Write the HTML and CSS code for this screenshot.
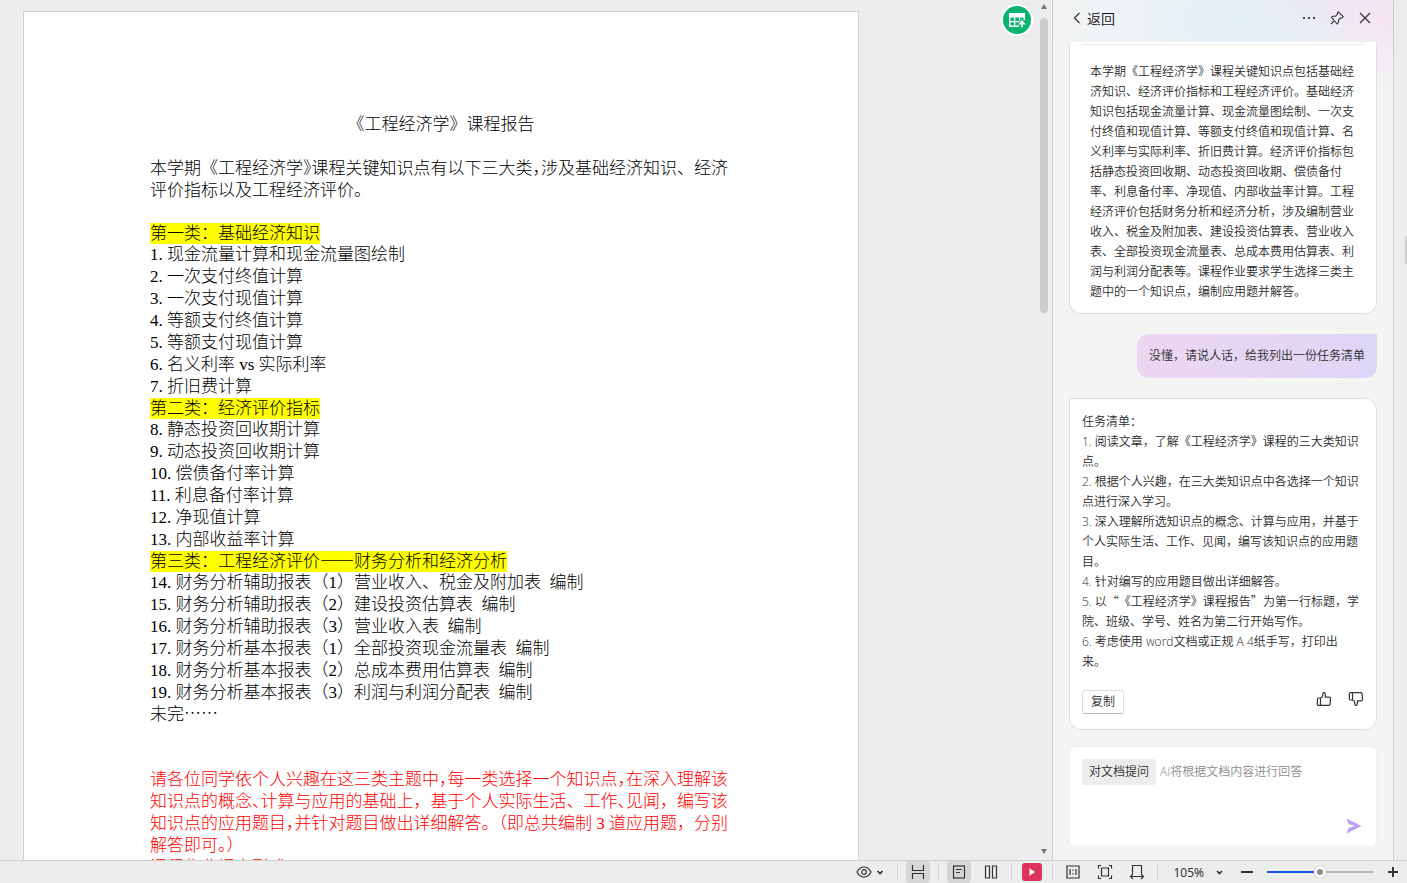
FILE: index.html
```html
<!DOCTYPE html>
<html lang="zh-CN">
<head>
<meta charset="utf-8">
<title>《工程经济学》课程报告</title>
<link rel="stylesheet" href="styles.css">
</head>
<body>
<div class="app">
  <main class="workspace">
    <article class="page">
      <h1 class="page-title">《工程经济学》课程报告</h1>
      <p class="intro">本学期《工程经济学<span class="half">》</span>课程关键知识点有以下三大类<span class="half">，</span>涉及基础经济知识、经济<br>评价指标以及工程经济评价。</p>
      <section>
        <h2 class="topic"><mark>第一类：基础经济知识</mark></h2>
        <p>1. 现金流量计算和现金流量图绘制</p>
        <p>2. 一次支付终值计算</p>
        <p>3. 一次支付现值计算</p>
        <p>4. 等额支付终值计算</p>
        <p>5. 等额支付现值计算</p>
        <p>6. 名义利率 vs 实际利率</p>
        <p>7. 折旧费计算</p>
      </section>
      <section>
        <h2 class="topic"><mark>第二类：经济评价指标</mark></h2>
        <p>8. 静态投资回收期计算</p>
        <p>9. 动态投资回收期计算</p>
        <p>10. 偿债备付率计算</p>
        <p>11. 利息备付率计算</p>
        <p>12. 净现值计算</p>
        <p>13. 内部收益率计算</p>
      </section>
      <section>
        <h2 class="topic"><mark>第三类：工程经济评价<span class="cjk">——</span>财务分析和经济分析</mark></h2>
        <p>14. 财务分析辅助报表（1）营业收入、税金及附加表&nbsp; 编制</p>
        <p>15. 财务分析辅助报表（2）建设投资估算表&nbsp; 编制</p>
        <p>16. 财务分析辅助报表（3）营业收入表&nbsp; 编制</p>
        <p>17. 财务分析基本报表（1）全部投资现金流量表&nbsp; 编制</p>
        <p>18. 财务分析基本报表（2）总成本费用估算表&nbsp; 编制</p>
        <p>19. 财务分析基本报表（3）利润与利润分配表&nbsp; 编制</p>
        <p>未完<span class="cjk">……</span></p>
      </section>
      <p class="notice">请各位同学依个人兴趣在这三类主题中<span class="half">，</span>每一类选择一个知识点<span class="half">，</span>在深入理解该<br>知识点的概念<span class="half">、</span>计算与应用的基础上，基于个人实际生活、工作<span class="half">、</span>见闻，编写该<br>知识点的应用题目<span class="half">，</span>并针对题目做出详细解答。（即总共编制 3 道应用题，分别<br>解答即可。）<br>课程作业提交形式</p>
    </article>
    <button class="table-btn" aria-label="导出表格">
      <svg width="28" height="28" viewBox="0 0 28 28"><circle cx="14" cy="14" r="14" fill="#0bb370"/><path d="M6 7h16v7H6zM6 7h1.500v14H6zM6 19.500h10V21H6zM6 15h10v1.300H6zM11 10h1.300v10H11zM16 10h1.300v5H16z" fill="#fff"/><path d="M7.500 11.500H11V15H7.500zM12.300 11.500H16V15h-3.700zM17.300 11.500h3.200V15h-3.200z" fill="#0bb370"/><path d="M19 21.500V16M16.800 17.700l2.200-2.600 2.200 2.600z" fill="#fff" stroke="#fff" stroke-width="1.500"/></svg>
    </button>
  </main>
  <div class="scrollbar">
    <svg width="6" height="5" viewBox="0 0 6 5"><path d="M3 0l3 5H0z" fill="#777"/></svg>
    <div class="thumb"></div>
    <svg width="6" height="5" viewBox="0 0 6 5"><path d="M3 5l3-5H0z" fill="#777"/></svg>
  </div>
  <aside class="panel">
    <header class="panel-head">
      <button class="back"><svg width="8" height="12" viewBox="0 0 8 12"><path d="M6.500 1L1.500 6l5 5" fill="none" stroke="#333" stroke-width="1.200"/></svg>返回</button>
      <span class="head-tools">
        <button aria-label="更多"><svg width="16" height="16" viewBox="0 0 16 16" fill="#222"><circle cx="3" cy="8" r="1.100"/><circle cx="8" cy="8" r="1.100"/><circle cx="13" cy="8" r="1.100"/></svg></button>
        <button aria-label="固定"><svg width="16" height="16" viewBox="0 0 16 16" fill="none" stroke="#333" stroke-width="1.100" stroke-linejoin="round"><path d="M9.300 1.800l4.900 4.900-1.300 1.300h-1.200L9.500 10.200l-.2 2.600-1.200 1.200L2.500 7.400l1.300-1.200 2.500.1 2.200-2.200V2.600zM5.300 10.700L2 14"/></svg></button>
        <button aria-label="关闭"><svg width="16" height="16" viewBox="0 0 16 16"><path d="M3 3l10 10M13 3L3 13" stroke="#333" stroke-width="1.200"/></svg></button>
      </span>
    </header>
    <div class="chat">
      <div class="card summary">
        <p>本学期《工程经济学》课程关键知识点包括基础经<br>济知识、经济评价指标和工程经济评价。基础经济<br>知识包括现金流量计算、现金流量图绘制、一次支<br>付终值和现值计算、等额支付终值和现值计算、名<br>义利率与实际利率、折旧费计算。经济评价指标包<br>括静态投资回收期、动态投资回收期、偿债备付<br>率、利息备付率、净现值、内部收益率计算。工程<br>经济评价包括财务分析和经济分析，涉及编制营业<br>收入、税金及附加表、建设投资估算表、营业收入<br>表、全部投资现金流量表、总成本费用估算表、利<br>润与利润分配表等。课程作业要求学生选择三类主<br>题中的一个知识点，编制应用题并解答。</p>
      </div>
      <p class="bubble">没懂，请说人话，给我列出一份任务清单</p>
      <div class="card answer">
        <p>任务清单：<br>1. 阅读文章，了解《工程经济学》课程的三大类知识<br>点。<br>2. 根据个人兴趣，在三大类知识点中各选择一个知识<br>点进行深入学习。<br>3. 深入理解所选知识点的概念、计算与应用，并基于<br>个人实际生活、工作、见闻，编写该知识点的应用题<br>目。<br>4. 针对编写的应用题目做出详细解答。<br>5. 以<span class="cjk">“</span>《工程经济学》课程报告<span class="cjk">”</span>为第一行标题，学<br>院、班级、学号、姓名为第二行开始写作。<br>6. 考虑使用 word文档或正规 A 4纸手写，打印出<br>来。</p>
        <div class="actions">
          <button class="copy">复制</button>
          <span class="votes">
            <button aria-label="赞"><svg width="16" height="16" viewBox="0 0 16 16" fill="none" stroke="#333" stroke-width="1.200" stroke-linejoin="round"><path d="M4.500 7v7.400H2.600a1.200 1.200 0 0 1-1.200-1.200V8.100A1.200 1.200 0 0 1 2.600 7zM4.500 7l1.800-1 .8-4c.1-.8 2.200-.7 2.200 1v3.200h3.900c.8 0 1.400.6 1.300 1.400l-.4 5.600c-.1.700-.6 1.200-1.300 1.200H4.500"/></svg></button>
            <button aria-label="踩"><svg width="16" height="16" viewBox="0 0 16 16" fill="none" stroke="#333" stroke-width="1.200" stroke-linejoin="round"><path d="M4.500 9V1.600H2.600a1.200 1.200 0 0 0-1.200 1.200v5.100A1.200 1.200 0 0 0 2.600 9zM4.500 9l1.800 1 .8 4c.1.800 2.200.7 2.200-1V9.800h3.900c.8 0 1.400-.6 1.300-1.400l-.4-5.600c-.1-.7-.6-1.200-1.300-1.200H4.500"/></svg></button>
          </span>
        </div>
      </div>
      <form class="ask">
        <div class="ask-row"><label class="chip" for="q">对文档提问</label><textarea id="q" class="ask-input" placeholder="AI将根据文档内容进行回答"></textarea></div>
        <button class="send" type="button" aria-label="发送"><svg width="16" height="16" viewBox="0 0 16 16"><path d="M.5.500L15.500 8 .5 15.500 2.500 10 9 8 2.500 6z" fill="#bd9ff5"/></svg></button>
      </form>
    </div>
  </aside>
  <div class="rail"><div class="grip"></div></div>
</div>
<footer class="status">
  <button class="tool eye" aria-label="视图保护"><svg width="27" height="16" viewBox="0 0 27 16" fill="none" stroke="#333" stroke-width="1.200"><path d="M1 8c3.500-6.700 10.500-6.700 14 0-3.500 6.700-10.500 6.700-14 0z"/><circle cx="8" cy="8" r="2.300"/><path d="M21.500 7l2.500 2.500L26.500 7" stroke-width="1.600"/></svg></button>
  <i class="sep"></i>
  <button class="tool on" aria-label="页间空白"><svg width="16" height="16" viewBox="0 0 16 16" fill="none" stroke="#333" stroke-width="1.200"><path d="M2.500 1v5.500h11V1M2.500 15V9.500h11V15"/></svg></button>
  <i class="sep"></i>
  <button class="tool on" aria-label="页面视图"><svg width="16" height="16" viewBox="0 0 16 16" fill="none" stroke="#333" stroke-width="1.200"><rect x="2.500" y="2" width="11" height="12"/><path d="M5 5.500h6M5 8.500h4"/></svg></button>
  <button class="tool" aria-label="双页视图"><svg width="16" height="16" viewBox="0 0 16 16" fill="none" stroke="#333" stroke-width="1.200"><path d="M2.500 2h4v12h-4zM9.500 2h4v12h-4z"/></svg></button>
  <i class="sep"></i>
  <button class="play" aria-label="放映"><svg width="10" height="10" viewBox="0 0 10 10"><path d="M2.500 1.200l5.500 3.800-5.500 3.800z" fill="#fff"/></svg></button>
  <i class="sep"></i>
  <button class="tool" aria-label="实际大小"><svg width="16" height="16" viewBox="0 0 16 16" fill="none" stroke="#333" stroke-width="1.200"><path d="M2 2h12v12H2zM5 5v6M11 5v6M8 5.500V7M8 9v1.500"/></svg></button>
  <button class="tool" aria-label="适合整页"><svg width="16" height="16" viewBox="0 0 16 16" fill="none" stroke="#333" stroke-width="1.200"><path d="M4.500 4h7v8h-7zM1.500 4.500v-3H4M12 1.500h2.500v3M14.500 11.500v3H12M4 14.500H1.500v-3"/></svg></button>
  <button class="tool" aria-label="适合页宽"><svg width="16" height="16" viewBox="0 0 16 16" fill="none" stroke="#333" stroke-width="1.200"><path d="M3.500 9.500v-8h9v8M2 12.500h12M4 10l-2.500 2.500L4 15M12 10l2.500 2.500L12 15"/></svg></button>
  <i class="sep"></i>
  <button class="zoom-value">105%<svg width="7" height="5" viewBox="0 0 7 5"><path d="M1 1l2.500 2.500L6 1" fill="none" stroke="#333" stroke-width="1.600"/></svg></button>
  <button class="step" aria-label="缩小"><svg width="12" height="12" viewBox="0 0 12 12"><path d="M0 6h12" stroke="#333" stroke-width="2"/></svg></button>
  <input class="zoom-range" type="range" min="0" max="100" value="50" aria-label="缩放">
  <button class="step" aria-label="放大"><svg width="12" height="12" viewBox="0 0 12 12"><path d="M1 6h10M6 1v10" stroke="#333" stroke-width="2"/></svg></button>
</footer>
</body>
</html>
```

FILE: styles.css
```css
* { box-sizing: border-box; }

body {
  margin: 0;
  height: 100vh;
  display: flex;
  flex-direction: column;
  overflow: hidden;
  background: #ededed;
  font-family: "Noto Sans CJK SC", sans-serif;
  font-size: 12px;
  color: #222;
}

h1, h2, p { margin: 0; font-size: inherit; font-weight: inherit; }

button {
  border: 0;
  padding: 0;
  background: none;
  font: inherit;
  color: inherit;
  display: flex;
  align-items: center;
  justify-content: center;
}

svg { display: block; }

.app { flex: 1; min-height: 0; display: flex; }

/* Document */
.workspace {
  position: relative;
  flex: 1;
  min-width: 0;
  display: flex;
  padding: 11px 0 0 23px;
  overflow: hidden;
}

.page {
  flex: 0 1 836px;
  min-width: 0;
  padding: 102px 126px 0 126px;
  border: 1px solid #d0d0d0;
  border-bottom: 0;
  background: #fff;
  color: #000;
  font-family: "Liberation Serif", "Noto Sans CJK SC", serif;
  font-weight: 300;
  font-size: 17px;
  line-height: 22px;
  white-space: nowrap;
}

.page-title { text-align: center; margin-bottom: 22px; }
.intro { margin-bottom: 21px; }
.topic { line-height: 21px; }
.topic mark { display: inline-block; vertical-align: top; background: #ff0; color: inherit; }
.notice { margin-top: 43px; color: #f00; }
.half, .cjk { font-family: "Noto Sans CJK SC", sans-serif; line-height: 1; }
.half { font-feature-settings: "halt"; }

.table-btn {
  position: absolute;
  top: 4px;
  right: 4px;
  width: 32px;
  height: 32px;
  border-radius: 50%;
  background: #fff;
}

.scrollbar {
  flex: 0 0 15px;
  display: flex;
  flex-direction: column;
  align-items: center;
  padding: 4px 1px 6px 0;
}
.scrollbar .thumb {
  width: 8px;
  height: 295px;
  margin: 9px 0 auto;
  border-radius: 4px;
  background: #cdcdcd;
}

/* Assistant panel */
.panel {
  flex: 0 0 342px;
  display: flex;
  flex-direction: column;
  border: solid #cfcfcf;
  border-width: 0 1px;
  background:
    radial-gradient(circle at 100% 20px, #f5e5f0, transparent 70px),
    radial-gradient(ellipse 100px 50px at 85% 0, #ebe6f4, transparent),
    radial-gradient(ellipse 200px 120px at 55% 20px, #e3eff6, transparent),
    #f4f4f4;
}
.panel-head {
  flex: 0 0 42px;
  display: flex;
  justify-content: space-between;
  align-items: flex-start;
  padding: 8px 20px 0;
}
.back { gap: 6px; font-size: 14px; font-weight: 350; line-height: 20px; color: #111; }
.head-tools { display: flex; gap: 12px; padding-top: 2px; }

.chat {
  flex: 1;
  display: flex;
  flex-direction: column;
  padding: 0 16px 13px;
  font-family: "Open Sans", "Noto Sans CJK SC", sans-serif;
  font-weight: 350;
  line-height: 20px;
  color: #2c2c2c;
  white-space: nowrap;
  text-spacing-trim: space-all;
}
.card { border: 1px solid #e0e0e0; background: #fff; }
.summary {
  position: relative;
  border-top: 0;
  border-radius: 0 0 12px 12px;
  padding: 20px 20px 11px;
}
.summary::before {
  content: "";
  position: absolute;
  top: 2px;
  left: 12px;
  right: 12px;
  height: 1px;
  background: #ececec;
}
.bubble {
  align-self: flex-end;
  margin: 20px 0;
  padding: 12px;
  border-radius: 12px 0 12px 12px;
  background: linear-gradient(100deg, #ecd6f1, #ddd6f6);
}
.answer { border-radius: 0 12px 12px 12px; padding: 13px 12px 15px; }
.actions {
  display: flex;
  justify-content: space-between;
  align-items: flex-start;
  margin-top: 18px;
}
.copy {
  width: 42px;
  height: 24px;
  border: 1px solid #dedede;
  border-bottom-color: #bbb;
  border-radius: 3px;
}
.votes { display: flex; gap: 16px; padding-top: 1px; }

.ask {
  flex: 1;
  display: flex;
  flex-direction: column;
  margin-top: 16px;
  padding: 12px;
  border: 1px solid #f0f0f0;
  border-radius: 6px;
  background: #fff;
}
.ask-row { flex: 1; display: flex; gap: 4px; }
.chip {
  height: 26px;
  padding: 3px 7px;
  border-radius: 3px;
  background: #ededed;
}
.ask-input {
  flex: 1;
  min-width: 0;
  border: 0;
  padding: 3px 0;
  resize: none;
  outline: 0;
  background: none;
  font: inherit;
  line-height: 20px;
}
.ask-input::placeholder { color: #8c8c8c; }
.send { align-self: flex-end; margin-right: 2px; }

.rail { flex: 0 0 13px; display: flex; align-items: center; justify-content: flex-end; }
.grip { width: 2px; height: 28px; margin-bottom: 360px; border-radius: 2px 0 0 2px; background: #cfcfcf; }

/* Status bar */
.status {
  flex: 0 0 23px;
  display: flex;
  justify-content: flex-end;
  align-items: center;
  padding-right: 8px;
  border-top: 1px solid #cfcfcf;
}
.tool { width: 24px; height: 22px; border-radius: 3px; }
.tool + .tool { margin-left: 8px; }
.tool.on { background: #d6d6d6; }
.eye { width: 27px; }
.sep { width: 1px; height: 14px; margin: 0 8px; background: #cfcfcf; }
.eye + .sep { margin-left: 14px; }
.play { width: 20px; height: 18px; margin: 0 2px; border-radius: 3px; background: #dd3259; }
.zoom-value { gap: 12px; margin: 0 18px 0 7px; font-family: "Noto Sans", sans-serif; color: #333; }
.zoom-range {
  appearance: none;
  width: 106px;
  height: 12px;
  margin: 0 14px;
  background: linear-gradient(90deg, #1f56e0 50%, #b8b8b8 50%) center / 100% 2px no-repeat;
}
.zoom-range::-webkit-slider-thumb {
  appearance: none;
  width: 12px;
  height: 12px;
  border: 3px solid #fff;
  border-radius: 50%;
  background: #8c8c8c;
  box-shadow: 0 0 1px #888;
}
```
